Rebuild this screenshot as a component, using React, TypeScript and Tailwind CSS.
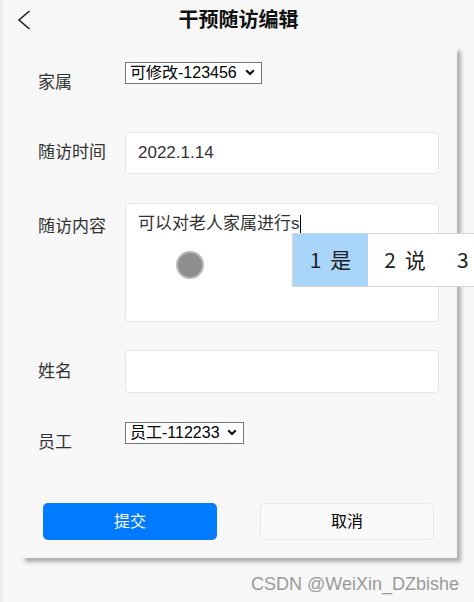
import React from 'react';

const FONT = { fontFamily: '"Liberation Sans", "Noto Sans CJK SC", sans-serif' };

const Label = ({ text, className = '' }: { text: string; className?: string }) => (
  <div className={`w-[87px] shrink-0 text-[17px] leading-5 text-[#333] ${className}`}>{text}</div>
);

const Select = ({ value, width }: { value: string; width: string }) => (
  <div className={`relative h-[22px] ${width}`}>
    <select className="w-full h-full appearance-none border border-[#767676] bg-white pl-[4px] text-[16px] text-black leading-none">
      <option>{value}</option>
    </select>
    <svg className="pointer-events-none absolute right-[7px] top-[8px]" width="10" height="7" viewBox="0 0 10 7">
      <polyline points="1.2,1.2 5,5 8.8,1.2" fill="none" stroke="#111" strokeWidth="2.2" />
    </svg>
  </div>
);

export default function App() {
  return (
    <div className="relative w-[474px] h-[602px] overflow-hidden bg-[#f7f7f7] border-l-[3px] border-[#ececec]" style={FONT}>
      {/* header */}
      <div className="relative h-[47px]">
        <svg className="absolute left-[14px] top-[10px]" width="14" height="20" viewBox="0 0 14 20">
          <polyline points="12.5,1 2,10 12.5,19" fill="none" stroke="#222" strokeWidth="1.6" />
        </svg>
        <div className="text-center text-[20px] font-bold leading-[41px] text-[#111]">干预随访编辑</div>
      </div>

      {/* card */}
      <div className="ml-[18px] mr-[17px] bg-[#f7f7f7] shadow-[4px_4px_4px_rgba(0,0,0,0.3)] pt-[14px] pb-[18px] pl-[17px] pr-[18px]">
        <div className="flex items-start">
          <Label text="家属" className="mt-[12px]" />
          <Select value="可修改-123456" width="w-[137px]" />
        </div>

        <div className="flex items-center mt-[39px]">
          <Label text="随访时间" />
          <div className="flex-1 h-[42px] rounded-[4px] border border-[#e6e6e6] bg-white flex items-center px-[12px] text-[17px] text-[#333]">
            2022.1.14
          </div>
        </div>

        <div className="flex items-start mt-[29px]">
          <Label text="随访内容" className="mt-[14px]" />
          <div className="relative flex-1 h-[119px] rounded-[4px] border border-[#e6e6e6] bg-white px-[12px] pt-[10px] text-[17px] leading-5 text-[#333]">
            <span>可以对老人家属进行s</span>
            <span className="inline-block w-px h-[18px] bg-black align-middle -mt-[2px]"></span>
          </div>
        </div>

        <div className="flex items-center mt-[28px]">
          <Label text="姓名" />
          <div className="flex-1 h-[43px] rounded-[4px] border border-[#e6e6e6] bg-white"></div>
        </div>

        <div className="flex items-start mt-[28px]">
          <Label text="员工" className="mt-[12px]" />
          <Select value="员工-112233" width="w-[119px]" />
        </div>

        <div className="flex justify-between mt-[50px] px-[5px]">
          <button className="w-[174px] h-[37px] rounded-[5px] bg-[#007aff] text-white text-[16px]">提交</button>
          <button className="w-[174px] h-[37px] rounded-[5px] border border-[#e8e8e8] bg-[#fafafa] text-black text-[16px]">取消</button>
        </div>
      </div>

      <div className="mt-[14px] pr-[15px] text-right text-[18px] leading-6 text-[#9a9a9a]">CSDN @WeiXin_DZbishe</div>

      {/* click marker */}
      <div className="absolute left-[173px] top-[251px] w-[28px] h-[28px] rounded-full bg-[#8e8e8e] border-2 border-[#b8b8b8]"></div>

      {/* IME candidate popup */}
      <div className="absolute left-[289px] top-[233px] right-0 h-[54px] flex border border-r-0 border-[#d6d6d6] bg-white text-[21px] text-[#222]" style={{ fontFamily: '"Noto Sans CJK SC", sans-serif' }}>
        <div className="w-[75px] flex items-center justify-center gap-[9px] bg-[#a9d5fa]"><span>1</span><span>是</span></div>
        <div className="w-[74px] flex items-center justify-center gap-[9px]"><span>2</span><span>说</span></div>
        <div className="flex-1 flex items-center pl-[15px]">3</div>
      </div>
    </div>
  );
}
